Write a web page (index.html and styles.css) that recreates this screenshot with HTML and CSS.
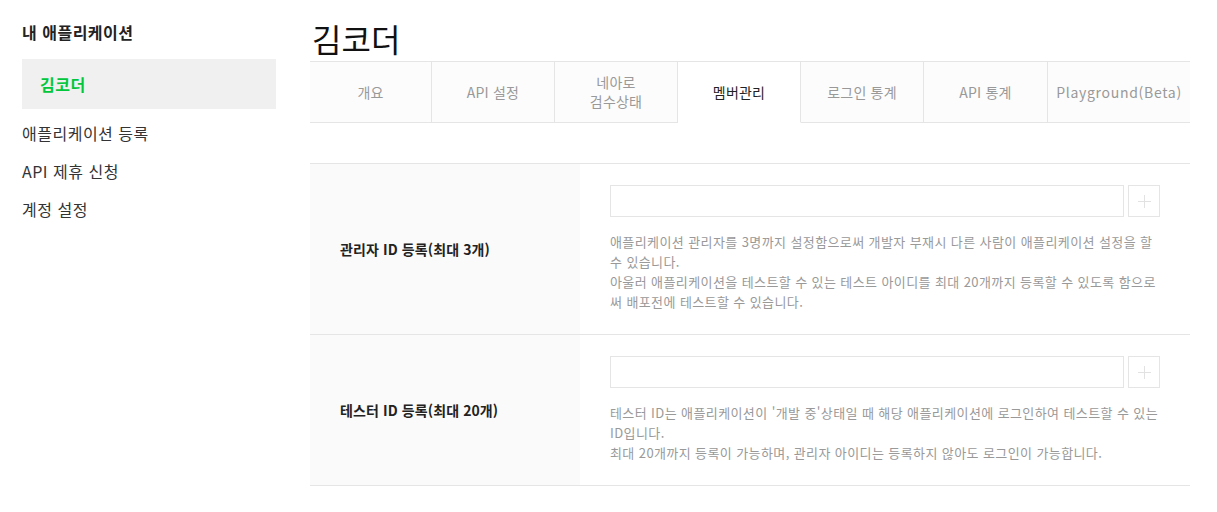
FILE: index.html
```html
<!DOCTYPE html>
<html lang="ko">
<head>
<meta charset="utf-8">
<title>김코더 - 멤버관리</title>
<link rel="stylesheet" href="styles.css">
</head>
<body>
<div class="page">
  <aside class="sidebar">
    <h2 class="side-title">내 애플리케이션</h2>
    <div class="side-active">김코더</div>
    <ul class="side-menu">
      <li>애플리케이션 등록</li>
      <li>API 제휴 신청</li>
      <li>계정 설정</li>
    </ul>
  </aside>
  <main class="main">
    <h1 class="app-title">김코더</h1>
    <nav class="tabs">
      <div class="tab">개요</div>
      <div class="tab">API 설정</div>
      <div class="tab">네아로<br>검수상태</div>
      <div class="tab tab-active">멤버관리</div>
      <div class="tab">로그인 통계</div>
      <div class="tab">API 통계</div>
      <div class="tab tab-last">Playground(Beta)</div>
    </nav>
    <section class="members">
      <div class="row">
        <div class="row-label">관리자 ID 등록(최대 3개)</div>
        <div class="row-body">
          <div class="input-line">
            <div class="id-input"></div>
            <div class="add-btn"><span class="plus"></span></div>
          </div>
          <p class="desc">애플리케이션 관리자를 3명까지 설정함으로써 개발자 부재시 다른 사람이 애플리케이션 설정을 할 수 있습니다.<br>아울러 애플리케이션을 테스트할 수 있는 테스트 아이디를 최대 20개까지 등록할 수 있도록 함으로써 배포전에 테스트할 수 있습니다.</p>
        </div>
      </div>
      <div class="row">
        <div class="row-label">테스터 ID 등록(최대 20개)</div>
        <div class="row-body">
          <div class="input-line">
            <div class="id-input"></div>
            <div class="add-btn"><span class="plus"></span></div>
          </div>
          <p class="desc">테스터 ID는 애플리케이션이 '개발 중'상태일 때 해당 애플리케이션에 로그인하여 테스트할 수 있는 ID입니다.<br>최대 20개까지 등록이 가능하며, 관리자 아이디는 등록하지 않아도 로그인이 가능합니다.</p>
        </div>
      </div>
    </section>
  </main>
</div>
</body>
</html>
```
FILE: styles.css
```css
* { box-sizing: border-box; }
html, body { margin: 0; padding: 0; background: #fff; }
body {
  font-family: "Noto Sans CJK KR", "Noto Sans", sans-serif;
  color: #333;
}
.page {
  display: flex;
  gap: 34px;
  padding-left: 22px;
}
.sidebar {
  width: 254px;
  flex: none;
  padding-top: 20px;
}
.side-title {
  margin: 0 0 15px;
  font-size: 16px;
  line-height: 24px;
  font-weight: 700;
  color: #222;
  letter-spacing: 0.5px;
}
.side-active {
  height: 50px;
  line-height: 50px;
  padding-left: 18px;
  background: #f0f0f0;
  color: #00c73c;
  font-size: 16px;
  font-weight: 700;
  margin-bottom: 5px;
  letter-spacing: 0.5px;
}
.side-menu {
  list-style: none;
  margin: 0;
  padding: 0;
}
.side-menu li {
  padding: 7px 0;
  font-size: 16px;
  line-height: 24px;
  color: #333;
  letter-spacing: 0.5px;
}
.main {
  width: 880px;
  flex: none;
}
.app-title {
  margin: 18px 0 3px 2px;
  font-size: 32px;
  line-height: 40px;
  font-weight: 400;
  color: #111;
}
.tabs {
  display: grid;
  grid-template-columns: 122px 123px 123px 123px 123px 124px 1fr;
  border-top: 1px solid #e5e5e5;
}
.tab {
  height: 61px;
  display: flex;
  align-items: center;
  justify-content: center;
  text-align: center;
  background: #fcfcfc;
  border-bottom: 1px solid #e5e5e5;
  border-right: 1px solid #e5e5e5;
  font-size: 14px;
  line-height: 19px;
  color: #999;
  letter-spacing: 0.2px;
}
.tab-active {
  background: #fff;
  border-bottom-color: #fff;
  color: #222;
}
.tab-last {
  border-right: none;
  letter-spacing: 0.7px;
}
.members {
  margin-top: 40px;
  border-top: 1px solid #e5e5e5;
}
.row {
  display: flex;
  border-bottom: 1px solid #e5e5e5;
}
.row-label {
  width: 270px;
  flex: none;
  background: #fafafa;
  display: flex;
  align-items: center;
  padding-left: 30px;
  font-size: 14px;
  font-weight: 700;
  color: #222;
  letter-spacing: 0.1px;
}
.row-body {
  flex: 1;
  padding: 21px 30px 22px 30px;
}
.input-line {
  display: flex;
  gap: 4px;
}
.id-input {
  flex: 1;
  height: 32px;
  border: 1px solid #e5e5e5;
  background: #fff;
}
.add-btn {
  width: 32px;
  height: 32px;
  border: 1px solid #e5e5e5;
  display: flex;
  align-items: center;
  justify-content: center;
}
.plus {
  position: relative;
  width: 13px;
  height: 13px;
}
.plus::before, .plus::after {
  content: "";
  position: absolute;
  background: #e2e2e2;
}
.plus::before { left: 6px; top: 0; width: 1px; height: 13px; }
.plus::after { top: 6px; left: 0; height: 1px; width: 13px; }
.desc {
  margin: 15px 0 0;
  font-size: 13px;
  line-height: 20px;
  color: #999;
  letter-spacing: 0.4px;
  word-break: break-all;
}
```
